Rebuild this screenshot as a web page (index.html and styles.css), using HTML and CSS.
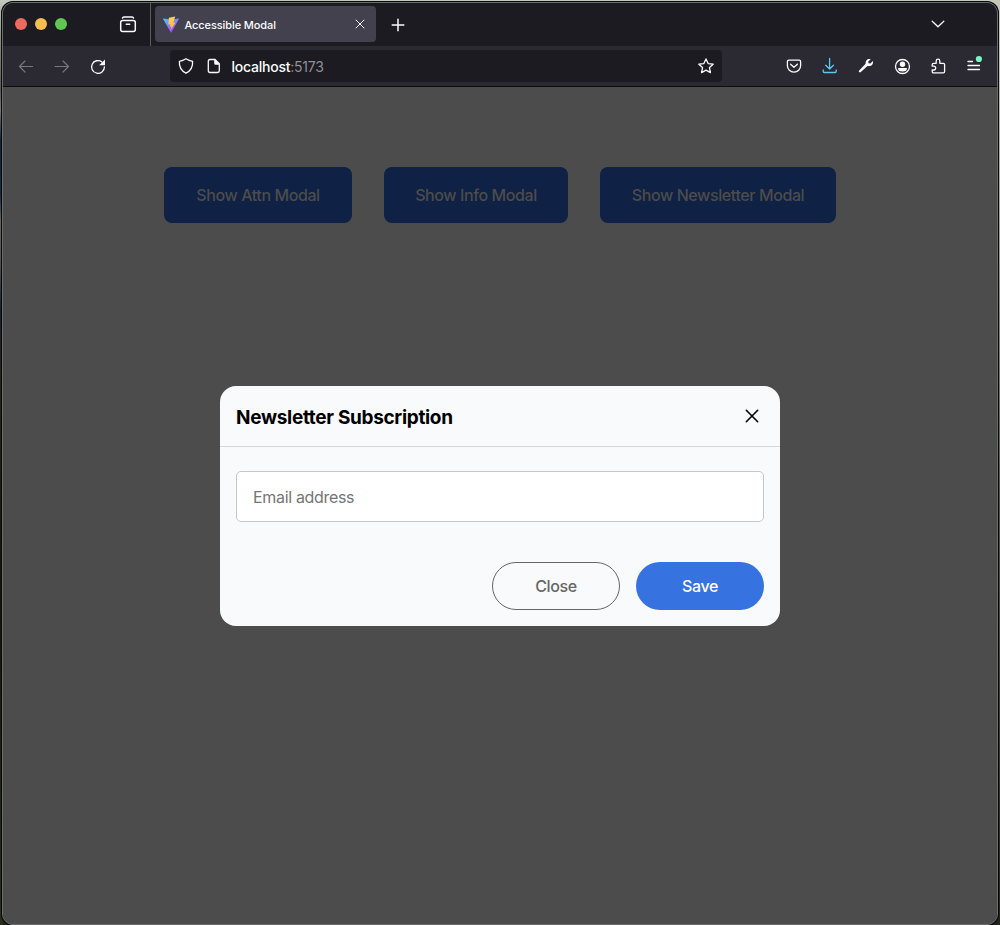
FILE: index.html
```html
<!DOCTYPE html>
<html lang="en">
<head>
<meta charset="utf-8">
<title>Accessible Modal</title>
<link rel="stylesheet" href="styles.css">
</head>
<body>
<div class="window">
  <header class="titlebar">
    <div class="lights"><span class="light red"></span><span class="light yellow"></span><span class="light green"></span></div>
    <svg class="icon view" viewBox="0 0 18 18"><path d="M3.500 2Q3.800 1 5 1h8Q14.200 1 14.500 2"/><rect x="1.700" y="4.500" width="14.600" height="11" rx="2"/><path d="M7.300 8.300h3.400"/></svg>
    <div class="tab">
      <svg class="logo" viewBox="0 0 16 16">
        <defs>
          <linearGradient id="shield" x1="0" y1="0" x2=".6" y2="1"><stop offset="0" stop-color="#41d1ff"/><stop offset="1" stop-color="#bd34fe"/></linearGradient>
          <linearGradient id="bolt" x1=".4" y1="0" x2=".6" y2="1"><stop offset="0" stop-color="#ffd65c"/><stop offset="1" stop-color="#ffb020"/></linearGradient>
        </defs>
        <path fill="url(#shield)" d="M15.900 2 8.400 15.400q-.3.400-.6 0L.1 2q-.2-.6.500-.5L8 2.800l7.300-1.300q.8-.1.600.5z"/>
        <path fill="url(#bolt)" d="M12.200-.4 5.900.7 5.300 7.500l2-.3L6.900 9.800l1.500-.3L7.600 13.300l4.800-7.900-2 .3z"/>
      </svg>
      <span class="tab-title">Accessible Modal</span>
      <svg class="icon tab-close" viewBox="0 0 10 10"><path d="m1 1 8 8M9 1 1 9"/></svg>
    </div>
    <svg class="icon plus" viewBox="0 0 14 14"><path d="M7 1.200v11.600M1.200 7h11.600"/></svg>
    <svg class="icon chevron" viewBox="0 0 14 8"><path d="m1.200 1.200 5.800 5.600 5.800-5.600"/></svg>
  </header>
  <nav class="toolbar">
    <div class="nav-icons">
      <svg class="icon dim" viewBox="0 0 16 16"><path d="M14.500 8.500H1.500M7 3 1.500 8.500 7 14"/></svg>
      <svg class="icon dim" viewBox="0 0 16 16"><path d="M1 8.500h13.500M9 3l5.500 5.500L9 14"/></svg>
      <svg class="icon" viewBox="0 0 16 16"><path d="M14.400 9A6.400 6.400 0 1 1 11.900 3.900"/><path class="solid" d="M15 1.500v5.800H9.200z"/></svg>
    </div>
    <div class="address">
      <svg class="icon" viewBox="0 0 16 16"><path d="M8 .8Q11 2.700 14.600 3.300C15 9 12.500 13 8 15.200 3.500 13 1 9 1.400 3.300 5 2.700 8 .8 8 .8z"/></svg>
      <svg class="icon page-icon" viewBox="0 0 16 16"><path d="M4 1.500h5l4.300 4.300v7q0 1.700-1.700 1.700H4q-1.700 0-1.700-1.700V3.200Q2.300 1.500 4 1.500z"/><path class="solid" d="M8.200 1.500v3.800q0 1.500 1.500 1.500h3.600V6L9.200 1.500z"/></svg>
      <span class="url">localhost<span class="port">:5173</span></span>
      <svg class="icon star" viewBox="0 0 16 16"><path d="m8 .9 2.150 4.650 5.050.6-3.750 3.450 1 5L8 12.100l-4.450 2.500 1-5L.8 6.150l5.050-.6z"/></svg>
    </div>
    <div class="tools">
      <svg class="icon" viewBox="0 0 16 16"><path d="M2.800 2.200h10.400q1.400 0 1.400 1.400v4.200a6.600 6.300 0 0 1-13.200 0V3.600Q1.400 2.200 2.800 2.200z"/><path d="M4.600 6.300 8 9.300 11.400 6.300"/></svg>
      <svg class="icon download" viewBox="0 0 16 16"><path d="M7.600.5v10.500M3.700 7.200 7.600 11l3.900-3.800M1.200 12v1.200q0 1.300 1.300 1.300h10.400q1.300 0 1.300-1.300V12"/></svg>
      <svg class="icon" viewBox="0 0 16 16"><path class="solid" d="M14.800 3.100 12.400 5.500 10.500 5.200 10.300 3.500 12.700 1.200C10.500.4 7.200 1.500 7.600 5.800L1.200 12.400q-.9.900-.1 1.700.8.800 1.700 0L9.600 8.100c4 .9 6.200-2.400 5.200-5z"/></svg>
      <svg class="icon" viewBox="0 0 16 16"><circle cx="8.500" cy="8.500" r="7"/><circle class="solid" cx="8.500" cy="6.200" r="2.700"/><path class="solid" d="M4.200 9.900h8.600q.7 3.500-4.300 3.500T4.200 9.900z"/></svg>
      <svg class="icon" viewBox="0 0 16 16"><path d="M2.200 8V6.600q0-1.300 1.300-1.300H6.200V3a1.800 1.800 0 0 1 3.600 0v2.300h3.500q1.300 0 1.300 1.300v7q0 1.300-1.300 1.300H3.500q-1.300 0-1.300-1.300V12h1.600a1.900 1.900 0 0 0 0-3.800H2.200z"/></svg>
      <svg class="icon menu" viewBox="0 0 16 16"><path d="M2 3.500h4.500M2 7.500h11.500M2 11.500h11.500"/><circle class="notice" cx="12.900" cy="1" r="3.100"/></svg>
    </div>
  </nav>
  <main class="page">
    <div class="launchers">
      <button class="launch attn">Show Attn Modal</button>
      <button class="launch info">Show Info Modal</button>
      <button class="launch news">Show Newsletter Modal</button>
    </div>
    <section class="modal" role="dialog" aria-labelledby="modal-title">
      <div class="modal-header">
        <h2 class="modal-title" id="modal-title">Newsletter Subscription</h2>
        <button class="modal-x" aria-label="Close"><svg class="x-icon" viewBox="0 0 14 14"><path d="m1.300 1.300 11.400 11.400M12.700 1.300 1.300 12.700"/></svg></button>
      </div>
      <div class="modal-body"><input class="email" type="email" placeholder="Email address"></div>
      <div class="modal-actions">
        <button class="pill outline">Close</button>
        <button class="pill primary">Save</button>
      </div>
    </section>
  </main>
</div>
</body>
</html>
```

FILE: styles.css
```css
* { box-sizing: border-box; }
body {
  margin: 0;
  height: 925px;
  padding: 2px 2px 0;
  overflow: hidden;
  font-family: Inter, "Liberation Sans", sans-serif;
  background:
    linear-gradient(#c3cabb, #8c8c80 40px, #5c5c58 90px, #777 110px, #102448 140px, #142a50 195px, #69645c 220px, #555 260px, #172036 310px, #2a2416 370px, #15150c 600px, #26301a 925px) left / 3px 100% no-repeat,
    linear-gradient(#c8c5bd, #aaa79f 200px, #55544c 500px, #24241a 925px) right / 3px 100% no-repeat,
    linear-gradient(#c3cabb, #c3cabb) top / 100% 20px no-repeat,
    #23261a;
}
button, input { font-family: inherit; margin: 0; }
.window {
  width: 996px;
  height: 923px;
  display: flex;
  flex-direction: column;
  overflow: hidden;
  border: 1px solid #6b6c6c;
  border-radius: 11px;
  background: #4c4c4c;
  box-shadow: 0 0 0 1px #080909;
}
.icon {
  display: block;
  flex: none;
  width: 16px;
  height: 16px;
  overflow: visible;
  fill: none;
  stroke: #fbfbfe;
  stroke-width: 1.3;
  stroke-linecap: round;
  stroke-linejoin: round;
}
.icon .solid { fill: #fbfbfe; stroke: none; }
.titlebar {
  flex: none;
  height: 43px;
  display: flex;
  align-items: center;
  padding: 0 52px 0 12px;
  background: #1c1b22;
}
.lights { display: flex; gap: 8px; margin: 0 52px 1px 0; }
.light { width: 12px; height: 12px; border-radius: 50%; }
.red { background: #ed6a5f; }
.yellow { background: #f5bf4f; }
.green { background: #62c654; }
.view { width: 18px; height: 18px; margin-right: 13px; stroke-width: 1.5; }
.tab {
  position: relative;
  z-index: 0;
  width: 226px;
  height: 43px;
  display: flex;
  align-items: center;
  padding: 0 11px 0 12px;
  border-left: 1px solid #5b5a60;
}
.tab::before {
  content: "";
  position: absolute;
  z-index: -1;
  inset: 3px 0 4px 4px;
  border-radius: 4px;
  background: #42414d;
}
.logo { width: 16px; height: 16px; flex: none; overflow: visible; }
.tab-title {
  margin-left: 5.500px;
  padding-top: 1px;
  font-size: 11px;
  font-weight: 500;
  line-height: 16px;
  letter-spacing: -.1px;
  color: #fbfbfe;
  white-space: nowrap;
}
.tab-close { width: 10px; height: 10px; margin: 0 0 2px auto; stroke-width: 1; }
.plus { width: 14px; height: 14px; margin-left: 14.500px; stroke-width: 1.5; }
.chevron { width: 14px; height: 8px; margin: 0 0 2px auto; stroke-width: 1.3; }
.toolbar {
  flex: none;
  height: 41px;
  display: flex;
  align-items: center;
  padding: 0 15px 0 15px;
  background: #2b2a33;
  border-bottom: 1px solid #0c0c0d;
}
.nav-icons { display: flex; gap: 20px; }
.dim { stroke: #77767c; stroke-width: 1.2; }
.address {
  width: 552px;
  height: 32px;
  display: flex;
  align-items: center;
  margin-left: 64px;
  padding: 0 8px;
  border-radius: 4px;
  background: #1c1b22;
}
.page-icon { margin-left: 12px; }
.url {
  margin-left: 9.500px;
  padding-top: 1px;
  font-size: 14px;
  font-weight: 500;
  letter-spacing: -.24px;
  color: #fbfbfe;
}
.port { font-weight: 400; color: #8f8f96; }
.star { margin-left: auto; }
.tools { display: flex; gap: 20px; margin-left: auto; }
.download { stroke: #5cc8ee; }
.menu .notice { fill: #7df5c0; stroke: none; }
.page {
  flex: 1;
  display: flex;
  flex-direction: column;
  align-items: center;
  padding-top: 80px;
  background: #4c4c4c;
}
.launchers { display: flex; gap: 32px; }
.launch {
  height: 56px;
  padding: 0;
  border: 0;
  border-radius: 8px;
  font-size: 16px;
  font-weight: 500;
  letter-spacing: -.4px;
  white-space: nowrap;
  background: #0f2144;
  color: #4c4c4c;
}
.attn { width: 188px; }
.info { width: 184px; }
.news { width: 236px; }
.modal {
  width: 560px;
  height: 240px;
  margin-top: 163px;
  border-radius: 16px;
  background: #f9fafc;
}
.modal-header {
  height: 61px;
  display: flex;
  align-items: center;
  justify-content: space-between;
  padding: 0 16px;
  border-bottom: 1px solid #d5d6d8;
}
.modal-title {
  margin: 4px 0 0;
  font-size: 19px;
  font-weight: 700;
  letter-spacing: -.32px;
  line-height: 24px;
  color: #000;
}
.modal-x {
  width: 24px;
  height: 24px;
  display: flex;
  align-items: center;
  justify-content: center;
  padding: 0;
  border: 0;
  background: none;
}
.x-icon { width: 14px; height: 14px; fill: none; stroke: #000; stroke-width: 1.6; stroke-linecap: round; }
.modal-body { padding: 24px 16px 0; }
.email {
  display: block;
  width: 528px;
  height: 51px;
  padding: 1px 16px 0;
  border: 1px solid #c6c7c9;
  border-radius: 5px;
  background: #fff;
  font-size: 16px;
  letter-spacing: -.33px;
}
.email::placeholder { color: #757575; opacity: 1; }
.modal-actions { display: flex; justify-content: flex-end; gap: 16px; padding: 40px 16px 16px; }
.pill {
  width: 128px;
  height: 48px;
  padding: 0;
  border: 0;
  border-radius: 24px;
  font-size: 16px;
  font-weight: 500;
  letter-spacing: -.4px;
}
.outline { border: 1px solid #666; background: #f9fafc; color: #666; }
.primary { background: #3672e0; color: #fff; }
```
